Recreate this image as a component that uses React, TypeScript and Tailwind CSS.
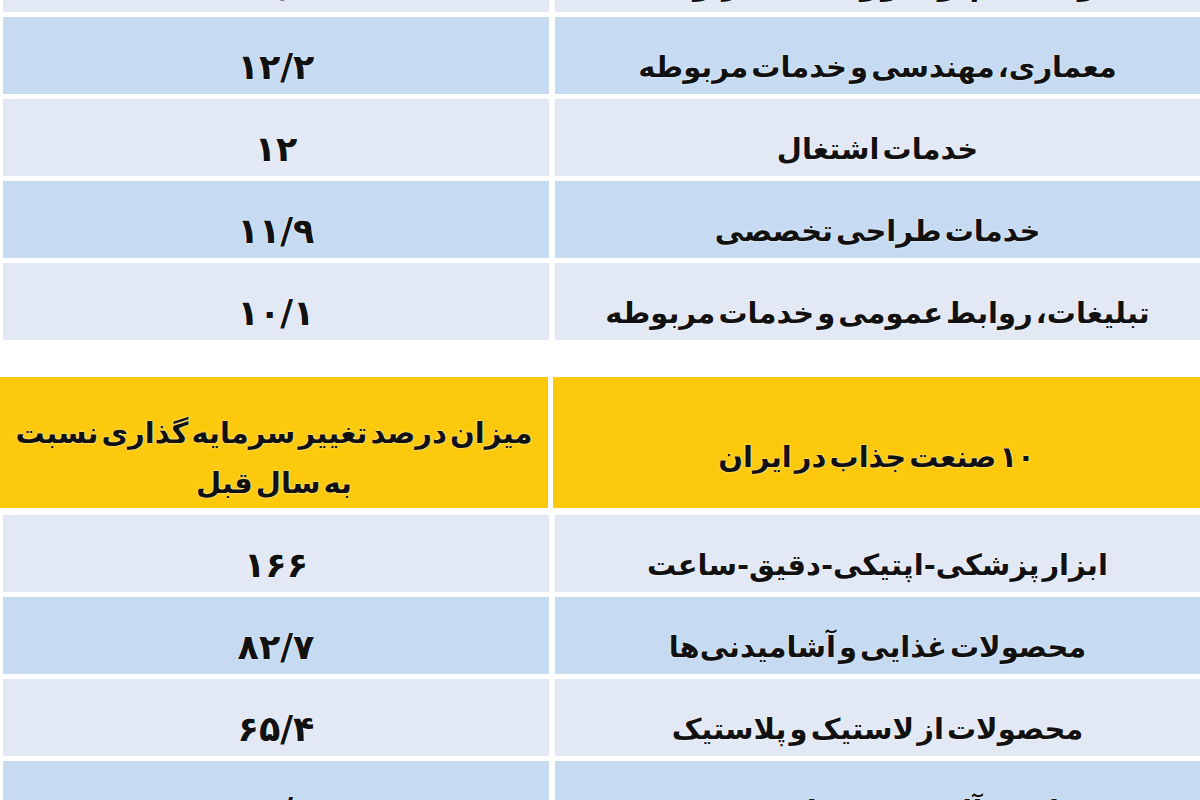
const topRows = [
  { name: "تولید فیلم، ویدئو و خدمات مربوطه", value: "۱۳/۸", tone: "light" },
  { name: "معماری، مهندسی و خدمات مربوطه", value: "۱۲/۲", tone: "blue" },
  { name: "خدمات اشتغال", value: "۱۲", tone: "light" },
  { name: "خدمات طراحی تخصصی", value: "۱۱/۹", tone: "blue" },
  { name: "تبلیغات، روابط عمومی و خدمات مربوطه", value: "۱۰/۱", tone: "light" },
];

const bottomRows = [
  { name: "ابزار پزشکی-اپتیکی-دقیق-ساعت", value: "۱۶۶", tone: "light" },
  { name: "محصولات غذایی و آشامیدنی‌ها", value: "۸۲/۷", tone: "blue" },
  { name: "محصولات از لاستیک و پلاستیک", value: "۶۵/۴", tone: "light" },
  { name: "ماشین‌آلات و تجهیزات صنعتی", value: "۵۶/۹", tone: "blue" },
];

const font =
  "font-['DejaVu_Sans',sans-serif] font-bold text-[#111] [text-shadow:0_0_2px_#fff] [word-spacing:-7px]";

function Row({ name, value, tone }: { name: string; value: string; tone: string }) {
  const bg = tone === "blue" ? "bg-[#c6dbf2]" : "bg-[#e2e9f5]";
  return (
    <div className="grid grid-cols-[546px_1fr] gap-[6px] h-[76px] pl-[3px]">
      <div className={`${bg} flex items-center justify-center pt-[24px] text-[35px] ${font}`}>
        <span dir="rtl">{value}</span>
      </div>
      <div className={`${bg} flex items-center justify-center pt-[24px] text-[29px] ${font}`}>
        <span dir="rtl">{name}</span>
      </div>
    </div>
  );
}

export default function App() {
  return (
    <div className="w-[1200px] h-[800px] overflow-hidden bg-white">
      <div className="flex flex-col gap-[6px] -mt-[65px]">
        {topRows.map((r) => (
          <Row key={r.name} {...r} />
        ))}
      </div>

      <div className="grid grid-cols-[548px_1fr] gap-[5px] h-[131px] mt-[38px] mb-[7px] overflow-hidden">
        <div className={`bg-[#fdc90c] flex items-center justify-center pt-[30px] text-[29px] leading-[50px] text-center ${font}`}>
          <span dir="rtl">
            میزان درصد تغییر سرمایه گذاری نسبت
            <br />
            به سال قبل
          </span>
        </div>
        <div className={`bg-[#fdc90c] flex items-center justify-center pt-[30px] text-[29px] ${font}`}>
          <span dir="rtl">۱۰ صنعت جذاب در ایران</span>
        </div>
      </div>

      <div className="flex flex-col gap-[6px]">
        {bottomRows.map((r) => (
          <Row key={r.name} {...r} />
        ))}
      </div>
    </div>
  );
}
